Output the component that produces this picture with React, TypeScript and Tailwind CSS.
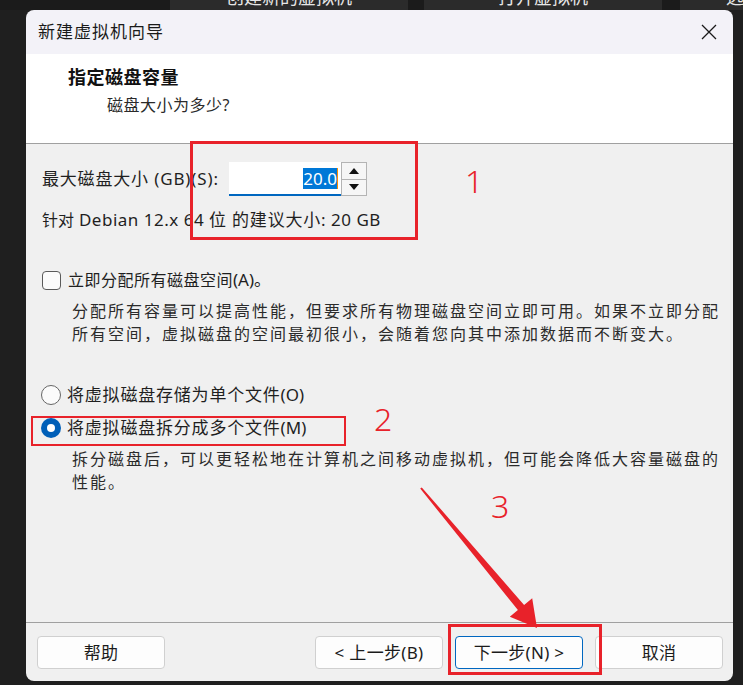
import React from "react";

const F = "font-['Noto_Sans','Noto_Sans_CJK_SC',sans-serif]";

function Tri({ up }: { up?: boolean }) {
  return (
    <svg width="10" height="6" viewBox="0 0 10 6">
      {up ? <polygon points="0,6 10,6 5,0" fill="#111" /> : <polygon points="0,0 10,0 5,6" fill="#111" />}
    </svg>
  );
}

function Btn({ children, primary }: { children: React.ReactNode; primary?: boolean }) {
  return (
    <div
      className={
        "w-[128px] h-[33px] rounded-[4px] flex items-center justify-center text-[17px] tracking-[0.3px] text-[#1b1b1b] bg-[#fdfdfd] " +
        (primary ? "border-[1.5px] border-[#0067c0]" : "border border-[#d0d0d0]")
      }
    >
      {children}
    </div>
  );
}

export default function App() {
  return (
    <div className={"relative w-[743px] h-[685px] bg-[#1f1f1f] overflow-hidden " + F}>
      {/* background tabs */}
      <div className="flex h-[10px] bg-[#1b1b1b]">
        <div className="w-[170px]" />
        <div className="w-[238px] bg-[#2b2b2b] flex justify-center overflow-hidden">
          <span className="text-[18px] leading-none text-[#e6e6e6] mt-[-12px] whitespace-nowrap">创建新的虚拟机</span>
        </div>
        <div className="w-[16px]" />
        <div className="w-[238px] bg-[#2b2b2b] flex justify-center overflow-hidden">
          <span className="text-[18px] leading-none text-[#e6e6e6] mt-[-12px] whitespace-nowrap">打开虚拟机</span>
        </div>
        <div className="w-[18px]" />
        <div className="flex-1 bg-[#2b2b2b] overflow-hidden pl-[46px]">
          <span className="text-[18px] leading-none text-[#e6e6e6] block mt-[-12px] whitespace-nowrap">远程</span>
        </div>
      </div>

      {/* dialog */}
      <div className="ml-[26px] w-[707px] h-[671px] rounded-[8px] overflow-hidden flex flex-col">
        {/* title bar */}
        <div className="h-[44px] bg-[#f3f2f8] flex items-center justify-between pl-[12px] pr-[16px]">
          <span className="text-[17px] tracking-[1px] text-[#1a1a1a]">新建虚拟机向导</span>
          <svg width="16" height="16" viewBox="0 0 16 16">
            <path d="M1 1 L15 15 M15 1 L1 15" stroke="#1a1a1a" strokeWidth="1.3" />
          </svg>
        </div>
        {/* header */}
        <div className="h-[90px] bg-white border-b border-[#a0a0a0] pt-[11px]">
          <div className="pl-[42px] text-[18px] leading-[24px] font-bold tracking-[0.5px] text-[#111]">指定磁盘容量</div>
          <div className="pl-[81px] mt-[4px] text-[16px] leading-[24px] tracking-[0.5px] text-[#2a2a2a]">磁盘大小为多少?</div>
        </div>
        {/* body */}
        <div className="flex-1 bg-[#f0f0f0] pl-[16px] text-[#1f1f1f]">
          <div className="mt-[18px] h-[34px] flex items-center">
            <span className="w-[187px] text-[17px] leading-[24px] whitespace-nowrap">
              <span className="tracking-[0.8px]">最大磁盘大小</span>
              <span className="tracking-[0.9px]"> (GB)(S):</span>
            </span>
            <div className="flex">
              <div className="w-[112px] h-[34px] bg-white border-b-2 border-[#0067c0] flex items-center justify-end pr-[3px]">
                <span className="bg-[#0078d7] text-white text-[17px] leading-[21px]">20.0</span>
                <span className="w-[1px] h-[21px] bg-[#ff8c00]" />
              </div>
              <div className="w-[26px] h-[34px] flex flex-col border border-[#b4b4b4] bg-[#f6f6f6]">
                <div className="flex-1 flex items-center justify-center border-b border-[#b4b4b4]">
                  <Tri up />
                </div>
                <div className="flex-1 flex items-center justify-center">
                  <Tri />
                </div>
              </div>
            </div>
          </div>
          <div className="mt-[12px] h-[24px] text-[17px] leading-[24px] whitespace-nowrap">
            <span className="text-[16px]">针对</span>
            <span className="tracking-[0.5px]"> Debian 12.x 64 </span>
            <span className="tracking-[0.8px]">位 的建议大小</span>
            <span className="tracking-[0.5px]">: 20 GB</span>
          </div>

          <div className="mt-[36px] h-[24px] flex items-center">
            <div className="w-[19px] h-[19px] rounded-[4px] border border-[#5a5a5a] bg-[#fbfbfb]" />
            <span className="ml-[7px] leading-[24px] whitespace-nowrap">
              <span className="text-[16px] tracking-[0.5px]">立即分配所有磁盘空间</span>
              <span className="text-[17px]">(A)。</span>
            </span>
          </div>
          <div className="mt-[8px] pl-[30px] text-[16px] leading-[23px] tracking-[2px] text-[#2b2b2b] w-[700px]">
            <div className="whitespace-nowrap">分配所有容量可以提高性能，但要求所有物理磁盘空间立即可用。如果不立即分配</div>
            <div className="whitespace-nowrap">所有空间，虚拟磁盘的空间最初很小，会随着您向其中添加数据而不断变大。</div>
          </div>

          <div className="mt-[37px] h-[24px] flex items-center -ml-[1px]">
            <div className="w-[20px] h-[20px] rounded-full border border-[#666] bg-[#fbfbfb]" />
            <span className="ml-[6px] text-[17px] leading-[24px] whitespace-nowrap">
              <span className="tracking-[0.8px]">将虚拟磁盘存储为单个文件</span>(O)
            </span>
          </div>
          <div className="mt-[9px] h-[24px] flex items-center -ml-[1px]">
            <div className="w-[20px] h-[20px] rounded-full bg-[#005fb8] flex items-center justify-center">
              <div className="w-[8px] h-[8px] rounded-full bg-white" />
            </div>
            <span className="ml-[6px] text-[17px] leading-[24px] whitespace-nowrap">
              <span className="tracking-[0.8px]">将虚拟磁盘拆分成多个文件</span>(M)
            </span>
          </div>
          <div className="mt-[8px] pl-[30px] text-[16px] leading-[23px] tracking-[2px] text-[#2b2b2b]">
            <div className="whitespace-nowrap">拆分磁盘后，可以更轻松地在计算机之间移动虚拟机，但可能会降低大容量磁盘的</div>
            <div className="whitespace-nowrap">性能。</div>
          </div>
        </div>
        {/* footer */}
        <div className="h-[59px] bg-[#f0f0f0] border-t border-[#a0a0a0] pt-[13px] pl-[11px] flex">
          <Btn>帮助</Btn>
          <div className="ml-[150px] flex gap-[12px]">
            <Btn>&lt; 上一步(B)</Btn>
            <Btn primary>下一步(N) &gt;</Btn>
            <Btn>取消</Btn>
          </div>
        </div>
      </div>

      {/* annotations */}
      <div className="absolute left-[190px] top-[141px] w-[228px] h-[99px] border-[3px] border-[#e8222a]" />
      <div className="absolute left-[31px] top-[416px] w-[315px] h-[30px] border-[2.5px] border-[#e8222a]" />
      <div className="absolute left-[448px] top-[624px] w-[154px] h-[51px] border-[3px] border-[#e8222a]" />
      <div className="absolute left-[465px] top-[161px] text-[32px] leading-[40px] text-[#e8222a] font-light">1</div>
      <div className="absolute left-[374px] top-[399px] text-[32px] leading-[40px] text-[#e8222a] font-light">2</div>
      <div className="absolute left-[491px] top-[486px] text-[32px] leading-[40px] text-[#e8222a] font-light">3</div>
      <svg className="absolute left-0 top-0" width="743" height="685" viewBox="0 0 743 685">
        <polygon
          points="420.2,488.6 517.9,610.1 509.8,616.8 537,628 532.2,598.2 524.1,604.9 421.8,487.4"
          fill="#e8222a"
        />
      </svg>
    </div>
  );
}
